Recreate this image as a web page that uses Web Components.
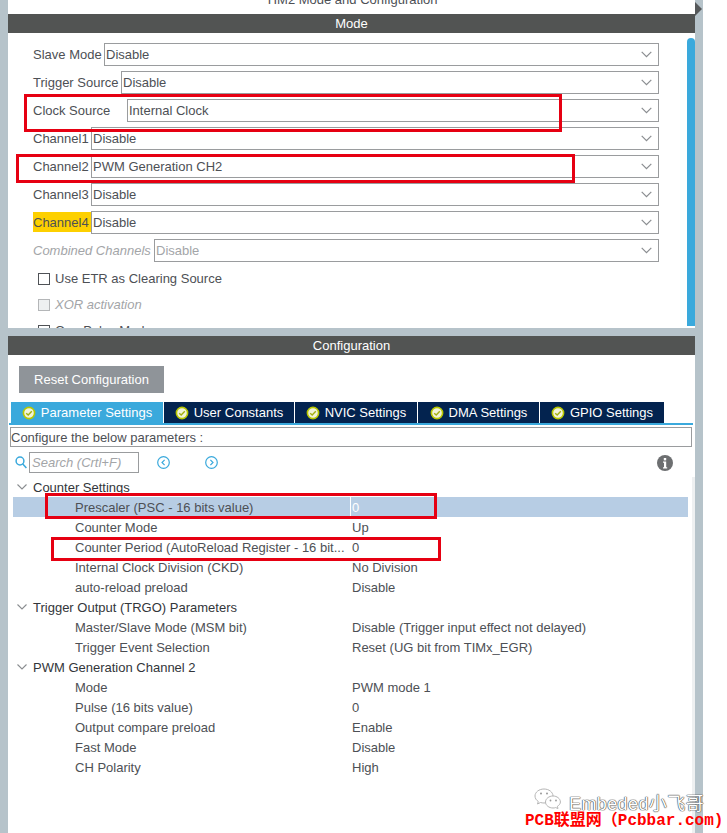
<!DOCTYPE html>
<html>
<head>
<meta charset="utf-8">
<title>TIM2 Mode and Configuration</title>
<style>
  html, body { margin: 0; padding: 0; background: #fff; }
  body { width: 727px; height: 833px; overflow: hidden; font-family: "Liberation Sans", Arial, sans-serif; }
</style>
</head>
<body>
<tim-page>
  <span slot="title">TIM2 Mode and Configuration</span>

  <panel-header slot="mode-header">Mode</panel-header>
  <mode-panel slot="mode">
    <mx-select style="--label-w:71px"><span slot="label">Slave Mode</span>Disable</mx-select>
    <mx-select style="--label-w:88px"><span slot="label">Trigger Source</span>Disable</mx-select>
    <mx-select style="--label-w:94px"><span slot="label">Clock Source</span>Internal Clock</mx-select>
    <mx-select style="--label-w:58px"><span slot="label">Channel1</span>Disable</mx-select>
    <mx-select style="--label-w:58px"><span slot="label">Channel2</span>PWM Generation CH2</mx-select>
    <mx-select style="--label-w:58px"><span slot="label">Channel3</span>Disable</mx-select>
    <mx-select style="--label-w:58px" warn><span slot="label">Channel4</span>Disable</mx-select>
    <mx-select style="--label-w:121px" disabled><span slot="label">Combined Channels</span>Disable</mx-select>
    <mx-check>Use ETR as Clearing Source</mx-check>
    <mx-check disabled>XOR activation</mx-check>
    <mx-check>One Pulse Mode</mx-check>
  </mode-panel>

  <panel-header slot="config-header">Configuration</panel-header>
  <config-panel slot="config">
    <reset-button>Reset Configuration</reset-button>
    <tab-bar>
      <mx-tab active style="--tab-w:152px">Parameter Settings</mx-tab>
      <mx-tab style="--tab-w:130px">User Constants</mx-tab>
      <mx-tab style="--tab-w:122px">NVIC Settings</mx-tab>
      <mx-tab style="--tab-w:121px">DMA Settings</mx-tab>
      <mx-tab style="--tab-w:124px">GPIO Settings</mx-tab>
    </tab-bar>
    <hint-box>Configure the below parameters :</hint-box>
    <search-bar></search-bar>
    <param-tree>
      <tree-group>Counter Settings</tree-group>
      <tree-row selected>Prescaler (PSC - 16 bits value)<span slot="value">0</span></tree-row>
      <tree-row>Counter Mode<span slot="value">Up</span></tree-row>
      <tree-row>Counter Period (AutoReload Register - 16 bit...<span slot="value">0</span></tree-row>
      <tree-row>Internal Clock Division (CKD)<span slot="value">No Division</span></tree-row>
      <tree-row>auto-reload preload<span slot="value">Disable</span></tree-row>
      <tree-group>Trigger Output (TRGO) Parameters</tree-group>
      <tree-row>Master/Slave Mode (MSM bit)<span slot="value">Disable (Trigger input effect not delayed)</span></tree-row>
      <tree-row>Trigger Event Selection<span slot="value">Reset (UG bit from TIMx_EGR)</span></tree-row>
      <tree-group>PWM Generation Channel 2</tree-group>
      <tree-row>Mode<span slot="value">PWM mode 1</span></tree-row>
      <tree-row>Pulse (16 bits value)<span slot="value">0</span></tree-row>
      <tree-row>Output compare preload<span slot="value">Enable</span></tree-row>
      <tree-row>Fast Mode<span slot="value">Disable</span></tree-row>
      <tree-row>CH Polarity<span slot="value">High</span></tree-row>
    </param-tree>
  </config-panel>

  <!-- annotations drawn on top of the screenshot -->
  <red-mark slot="overlay" style="left:24px;top:94px;width:538px;height:38px"></red-mark>
  <red-mark slot="overlay" style="left:16px;top:154px;width:559px;height:29px"></red-mark>
  <red-mark slot="overlay" style="left:45px;top:493px;width:392px;height:26px"></red-mark>
  <red-mark slot="overlay" style="left:51px;top:537px;width:390px;height:24px"></red-mark>
  <water-mark slot="overlay"></water-mark>
</tim-page>

<script>
  const FONT = '"Liberation Sans", Arial, sans-serif';

  // small helper, every element is just a template in a shadow root
  function register(name, html) {
    const tpl = document.createElement('template');
    tpl.innerHTML = html;
    customElements.define(name, class extends HTMLElement {
      constructor() {
        super();
        this.attachShadow({ mode: 'open' }).appendChild(tpl.content.cloneNode(true));
      }
    });
  }

  const CHEVRON = `<svg width="11" height="7" viewBox="0 0 11 7" fill="none" stroke="#8a8d90" stroke-width="1.2"><path d="M.7 .8 5.5 5.6 10.3 .8"/></svg>`;

  const TICK = `<svg width="14" height="14" viewBox="0 0 14 14">
    <circle cx="7" cy="7" r="5.6" fill="#f1f3da" stroke="#b9c800" stroke-width="1.6"/>
    <path d="M4.200 7.200 6.200 9 9.800 5.200" fill="none" stroke="#a3b010" stroke-width="1.4"/></svg>`;

  register('tim-page', `
    <style>
      :host { display: block; position: relative; width: 727px; height: 833px; overflow: hidden; background: #fff;
              font: 13px ${FONT}; color: #4d5055; }
      .frame { display: grid; grid-template-columns: 8px 687px 8px; height: 833px; }
      .gutter { background: #b6c3ca; position: relative; }
      .tri { position: absolute; left: 0; top: 2px; width: 0; height: 0; border-left: 7px solid #55585a;
             border-top: 7px solid transparent; border-bottom: 7px solid transparent; }
      .main { display: flex; flex-direction: column; min-width: 0; }
      .title { height: 14px; background: #fff; text-align: center; overflow: hidden; line-height: 14px; }
      .title div { margin-top: -7px; }
      .sep { height: 8px; background: #b6c3ca; flex: none; }
    </style>
    <div class="frame">
      <div class="gutter"></div>
      <div class="main">
        <div class="title"><div><slot name="title"></slot></div></div>
        <slot name="mode-header"></slot>
        <slot name="mode"></slot>
        <div class="sep"></div>
        <slot name="config-header"></slot>
        <slot name="config"></slot>
      </div>
      <div class="gutter"><div class="tri"></div></div>
    </div>
    <slot name="overlay"></slot>`);

  register('panel-header', `
    <style>
      :host { display: block; height: 19px; line-height: 19px; background: #525453; color: #fff; text-align: center; flex: none; }
    </style><slot></slot>`);

  register('mode-panel', `
    <style>
      :host { display: flex; height: 295px; overflow: hidden; flex: none; background: #fff; }
      .body { flex: 1; min-width: 0; padding: 10px 28px 0 25px; display: flex; flex-direction: column; gap: 5px; }
      .track { width: 8px; padding-top: 5px; padding-bottom: 2px; display: flex; }
      .thumb { flex: 1; background: #3aa9dc; border-radius: 4px 4px 0 0; }
    </style>
    <div class="body"><slot></slot></div>
    <div class="track"><div class="thumb"></div></div>`);

  register('mx-select', `
    <style>
      :host { display: flex; height: 23px; flex: none; }
      .label { flex: none; width: var(--label-w); line-height: 23px; white-space: nowrap; }
      .box { flex: 1; display: flex; align-items: center; justify-content: space-between; box-sizing: border-box;
             border: 1px solid #9a9c9e; padding: 0 6px 0 1px; background: #fff; }
      :host([warn]) .label { background: #fdd000; height: 20px; line-height: 21px; margin-top: 1px; }
      :host([disabled]) { color: #a3a5a8; }
      :host([disabled]) .label { font-style: italic; }
    </style>
    <div class="label"><slot name="label"></slot></div>
    <div class="box"><span><slot></slot></span>${CHEVRON}</div>`);

  register('mx-check', `
    <style>
      :host { display: flex; align-items: center; gap: 5px; height: 17px; margin: 3px 0 1px 5px; flex: none; white-space: nowrap; }
      .b { width: 10px; height: 10px; border: 1px solid #4f5256; background: #fff; flex: none; }
      :host([disabled]) { color: #a3a5a8; font-style: italic; }
      :host([disabled]) .b { border-color: #b4b6b8; background: #eef0f1; }
    </style>
    <div class="b"></div><slot></slot>`);

  register('config-panel', `
    <style>
      :host { display: flex; flex-direction: column; flex: 1; min-height: 0; background: #fff; }
    </style><slot></slot>`);

  register('reset-button', `
    <style>
      :host { display: block; flex: none; box-sizing: border-box; width: 145px; height: 27px; margin: 11px 0 9px 11px;
              background: #8f9499; color: #fff; text-align: center; line-height: 27px; }
    </style><slot></slot>`);

  register('tab-bar', `
    <style>
      :host { display: flex; gap: 1px; flex: none; height: 21px; padding: 0 0 0 2px; margin-left: 1px; width: 682px;
              border-bottom: 2px solid #3aa9dc; }
    </style><slot></slot>`);

  register('mx-tab', `
    <style>
      :host { display: flex; align-items: center; justify-content: center; gap: 5px; flex: none; box-sizing: border-box;
              width: var(--tab-w); height: 21px; background: #03234f; color: #fff; white-space: nowrap; }
      :host([active]) { background: #3aa9dc; }
    </style>${TICK}<span><slot></slot></span>`);

  register('hint-box', `
    <style>
      :host { display: block; flex: none; box-sizing: border-box; width: 682px; height: 20px; margin: 2px 0 0 2px;
              border: 1px solid #9a9c9e; line-height: 19px; padding-left: 0; }
    </style><slot></slot>`);

  register('search-bar', `
    <style>
      :host { display: flex; align-items: center; flex: none; height: 21px; margin: 5px 0 4px 7px; position: relative; }
      .lens { margin-right: 2px; }
      .input { box-sizing: border-box; width: 110px; height: 21px; border: 1px solid #9a9c9e; color: #a3a5a8;
               font-style: italic; line-height: 20px; padding-left: 2px; white-space: nowrap; overflow: hidden; }
      .nav { display: flex; gap: 35px; margin-left: 18px; }
      .info { margin-left: 439px; }
    </style>
    <svg class="lens" width="12" height="13" viewBox="0 0 12 13" fill="none" stroke="#3aa9dc" stroke-width="1.5">
      <circle cx="5" cy="5" r="3.900"/><path d="M7.800 8 11.400 12"/></svg>
    <div class="input">Search (Crtl+F)</div>
    <div class="nav">
      <svg width="13" height="13" viewBox="0 0 13 13" fill="none" stroke="#3aa9dc" stroke-width="1.2">
        <circle cx="6.500" cy="6.500" r="5.800"/><path d="M7.600 3.800 5 6.500 7.600 9.200"/></svg>
      <svg width="13" height="13" viewBox="0 0 13 13" fill="none" stroke="#3aa9dc" stroke-width="1.2">
        <circle cx="6.500" cy="6.500" r="5.800"/><path d="M5.400 3.800 8 6.500 5.400 9.200"/></svg>
    </div>
    <svg class="info" width="16" height="16" viewBox="0 0 16 16">
      <circle cx="8" cy="8" r="8" fill="#6d6f71"/>
      <rect x="6.800" y="3" width="2.400" height="2.400" fill="#fff"/>
      <path d="M6 6.600h3.200v5.600h1v1.200H6v-1.200h1V7.800H6z" fill="#fff"/></svg>`);

  register('param-tree', `
    <style>
      :host { display: block; flex: 1; min-height: 0; padding-left: 5px; border-right: 3px solid #eef0f1; box-sizing: border-box; }
      .rows { width: 675px; }
    </style><div class="rows"><slot></slot></div>`);

  register('tree-group', `
    <style>
      :host { display: flex; align-items: center; height: 20px; color: #33363a; white-space: nowrap; }
      svg { margin: 0 6px 0 4px; flex: none; }
    </style>
    <svg width="10" height="6" viewBox="0 0 10 6" fill="none" stroke="#8a8d90" stroke-width="1.1"><path d="M.5 .5 5 5 9.500 .5"/></svg>
    <slot></slot>`);

  register('tree-row', `
    <style>
      :host { display: grid; grid-template-columns: 337px 1fr; height: 20px; line-height: 21px; white-space: nowrap; }
      .name { padding-left: 62px; min-width: 0; }
      .value { padding-left: 1px; border-left: 1px solid transparent; }
      :host([selected]) { background: #b7cde4; }
      :host([selected]) .value { border-left-color: #fff; color: #fff; }
    </style>
    <div class="name"><slot></slot></div>
    <div class="value"><slot name="value"></slot></div>`);

  register('red-mark', `
    <style>
      :host { display: block; position: absolute; box-sizing: border-box; border: 3px solid #e60012; }
    </style>`);

  register('water-mark', `
    <style>
      :host { display: block; position: absolute; left: 525px; top: 788px; width: 202px; height: 45px; }
      .wx { position: absolute; left: 9px; top: 0; }
      .name { position: absolute; left: 44px; top: 1px; font: 18px ${FONT}, "Noto Sans CJK SC"; letter-spacing: .4px;
              color: #fff; white-space: nowrap; text-shadow: 0 0 1px #444, 0 0 1px #444, 0 0 1px #444; }
      .site { position: absolute; left: 0; top: 18px; font: bold 16px "Liberation Mono", "Noto Sans CJK SC", monospace;
              color: #f00; white-space: nowrap; }
    </style>
    <svg class="wx" width="28" height="21" viewBox="0 0 28 21" fill="#fff" stroke="#b5b5b5" stroke-width="1">
      <path d="M10 1C5 1 1 4.200 1 8c0 2.300 1.300 4.200 3.300 5.500L3.500 16l3-1.500c1 .3 2.300.5 3.500.5 5 0 9-3.200 9-7s-4-7-9-7z"/>
      <path d="M19 8c-4 0-7.500 2.700-7.500 6s3.500 6 7.500 6c.9 0 1.800-.1 2.600-.4L24 20.500l-.6-2.200c1.800-1.100 3-2.600 3-4.300 0-3.300-3.400-6-7.400-6z"/>
      <g fill="#999" stroke="none"><circle cx="7" cy="5.500" r="1"/><circle cx="13" cy="5.500" r="1"/><circle cx="16.500" cy="12.500" r=".9"/><circle cx="22" cy="12.500" r=".9"/></g>
    </svg>
    <div class="name">Embeded小飞哥</div>
    <div class="site">PCB联盟网（Pcbbar.com)</div>`);
</script>
</body>
</html>
